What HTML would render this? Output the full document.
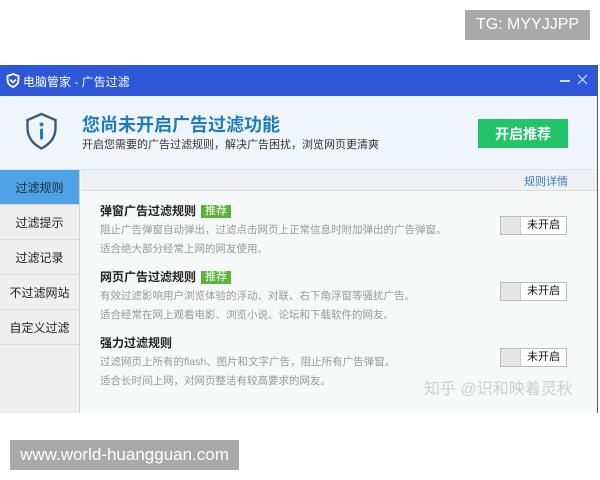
<!DOCTYPE html>
<html><head><meta charset="utf-8"><style>
*{margin:0;padding:0;box-sizing:border-box}
body{width:600px;height:480px;background:#fff;position:relative;overflow:hidden;font-family:"Liberation Sans","Noto Sans CJK SC",sans-serif}
.abs{position:absolute}
.lbl{background:#a9a9a9;color:#fff;font-size:16px;display:flex;align-items:center;justify-content:center}
.win{left:0;top:65px;width:598px;height:348px;border-right:1px solid #555;background:#f7f8f8}
.title{left:0;top:0;width:597px;height:31px;background:#2d57d6;color:#fff;font-size:12px}
.hdr{left:0;top:31px;width:597px;height:74px;background:#f0f5fb;border-bottom:1px solid #dde2e8}
.side{left:0;top:105px;width:80px;height:243px;background:#efefef;border-right:1px solid #d0d0d0}
.si{height:35px;border-bottom:1px solid #dcdcdc;font-size:12px;color:#222;display:flex;align-items:center;justify-content:center}
.tabbar{left:81px;top:105px;width:516px;height:21px;background:#eef0f1;border-bottom:1px solid #dcdcdc}
.t{font-size:12px;font-weight:bold;color:#222}
.tag{display:inline-block;background:#5cb23a;color:#fff;font-size:11px;padding:0 4px;line-height:13px;margin-left:5px;font-weight:normal;vertical-align:1px}
.d{font-size:10.5px;color:#999}
.tg{width:67px;height:19px;border:1px solid #bbb;background:#fff;display:flex}
.tg i{width:20px;background:#e6e6e6;border-right:1px solid #ccc}
.tg span{flex:1;font-size:11px;color:#111;text-align:center;line-height:17px}
</style></head><body>
<div class="abs lbl" style="left:465px;top:10px;width:125px;height:30px">TG: MYYJJPP</div>
<div class="abs lbl" style="left:10px;top:440px;width:229px;height:30px;font-size:17px">www.world-huangguan.com</div>
<div class="abs win">
 <div class="abs title">
  <svg class="abs" style="left:6px;top:8px" width="14" height="15" viewBox="0 0 14 15"><path d="M7 1L1.5 3v4c0 3.5 2.5 5.8 5.5 7 3-1.2 5.5-3.5 5.5-7V3z" fill="none" stroke="#fff" stroke-width="1.8"/><path d="M4 6.5l3 3 3-3" fill="none" stroke="#fff" stroke-width="1.6"/></svg>
  <div class="abs" style="left:23px;top:8px">电脑管家 - 广告过滤</div>
  <div class="abs" style="left:560px;top:15px;width:10px;height:1.5px;background:#fff;opacity:.8"></div>
  <svg class="abs" style="left:577px;top:9px" width="11" height="11" viewBox="0 0 11 11"><path d="M1 1L10 10M10 1L1 10" stroke="#fff" stroke-width="1.1" opacity=".85"/></svg>
 </div>
 <div class="abs hdr">
  <svg class="abs" style="left:25px;top:16px" width="33" height="39" viewBox="0 0 33 39"><path d="M16.5 2L2.5 8v8c0 10 6.5 16.5 14 20.5 7.5-4 14-10.5 14-20.5V8z" fill="none" stroke="#3f5a78" stroke-width="2.4"/><circle cx="16.5" cy="12.5" r="2" fill="#1e7bc0"/><rect x="15" y="16.5" width="3" height="11" rx="1.3" fill="#1e7bc0"/></svg>
  <div class="abs" style="left:82px;top:15px;font-size:18px;font-weight:bold;color:#1e7bc0">您尚未开启广告过滤功能</div>
  <div class="abs" style="left:82px;top:40px;font-size:11px;color:#333">开启您需要的广告过滤规则，解决广告困扰，浏览网页更清爽</div>
  <div class="abs" style="left:478px;top:23px;width:90px;height:29px;background:#22c369;color:#fff;font-size:14px;font-weight:bold;display:flex;align-items:center;justify-content:center">开启推荐</div>
 </div>
 <div class="abs side">
  <div class="si" style="background:#4ea2e6;color:#1a2a3a">过滤规则</div>
  <div class="si">过滤提示</div>
  <div class="si">过滤记录</div>
  <div class="si">不过滤网站</div>
  <div class="si">自定义过滤</div>
 </div>
 <div class="abs tabbar"><div class="abs" style="right:29px;top:3px;font-size:11px;color:#3a7fc8">规则详情</div></div>
 <div class="abs t" style="left:100px;top:137px">弹窗广告过滤规则<span class="tag">推荐</span></div>
 <div class="abs d" style="left:100px;top:157px">阻止广告弹窗自动弹出，过滤点击网页上正常信息时附加弹出的广告弹窗。</div>
 <div class="abs d" style="left:100px;top:176px">适合绝大部分经常上网的网友使用。</div>
 <div class="abs tg" style="left:500px;top:151px"><i></i><span>未开启</span></div>
 <div class="abs t" style="left:100px;top:203px">网页广告过滤规则<span class="tag">推荐</span></div>
 <div class="abs d" style="left:100px;top:223px">有效过滤影响用户浏览体验的浮动、对联、右下角浮窗等骚扰广告。</div>
 <div class="abs d" style="left:100px;top:242px">适合经常在网上观看电影、浏览小说、论坛和下载软件的网友。</div>
 <div class="abs tg" style="left:500px;top:217px"><i></i><span>未开启</span></div>
 <div class="abs t" style="left:100px;top:269px">强力过滤规则</div>
 <div class="abs d" style="left:100px;top:289px">过滤网页上所有的flash、图片和文字广告，阻止所有广告弹窗。</div>
 <div class="abs d" style="left:100px;top:308px">适合长时间上网，对网页整洁有较高要求的网友。</div>
 <div class="abs tg" style="left:500px;top:283px"><i></i><span>未开启</span></div>
 <div class="abs" style="left:424px;top:310px;font-size:16px;color:#cfcfcf">知乎 @识和映着灵秋</div>
</div>
</body></html>
